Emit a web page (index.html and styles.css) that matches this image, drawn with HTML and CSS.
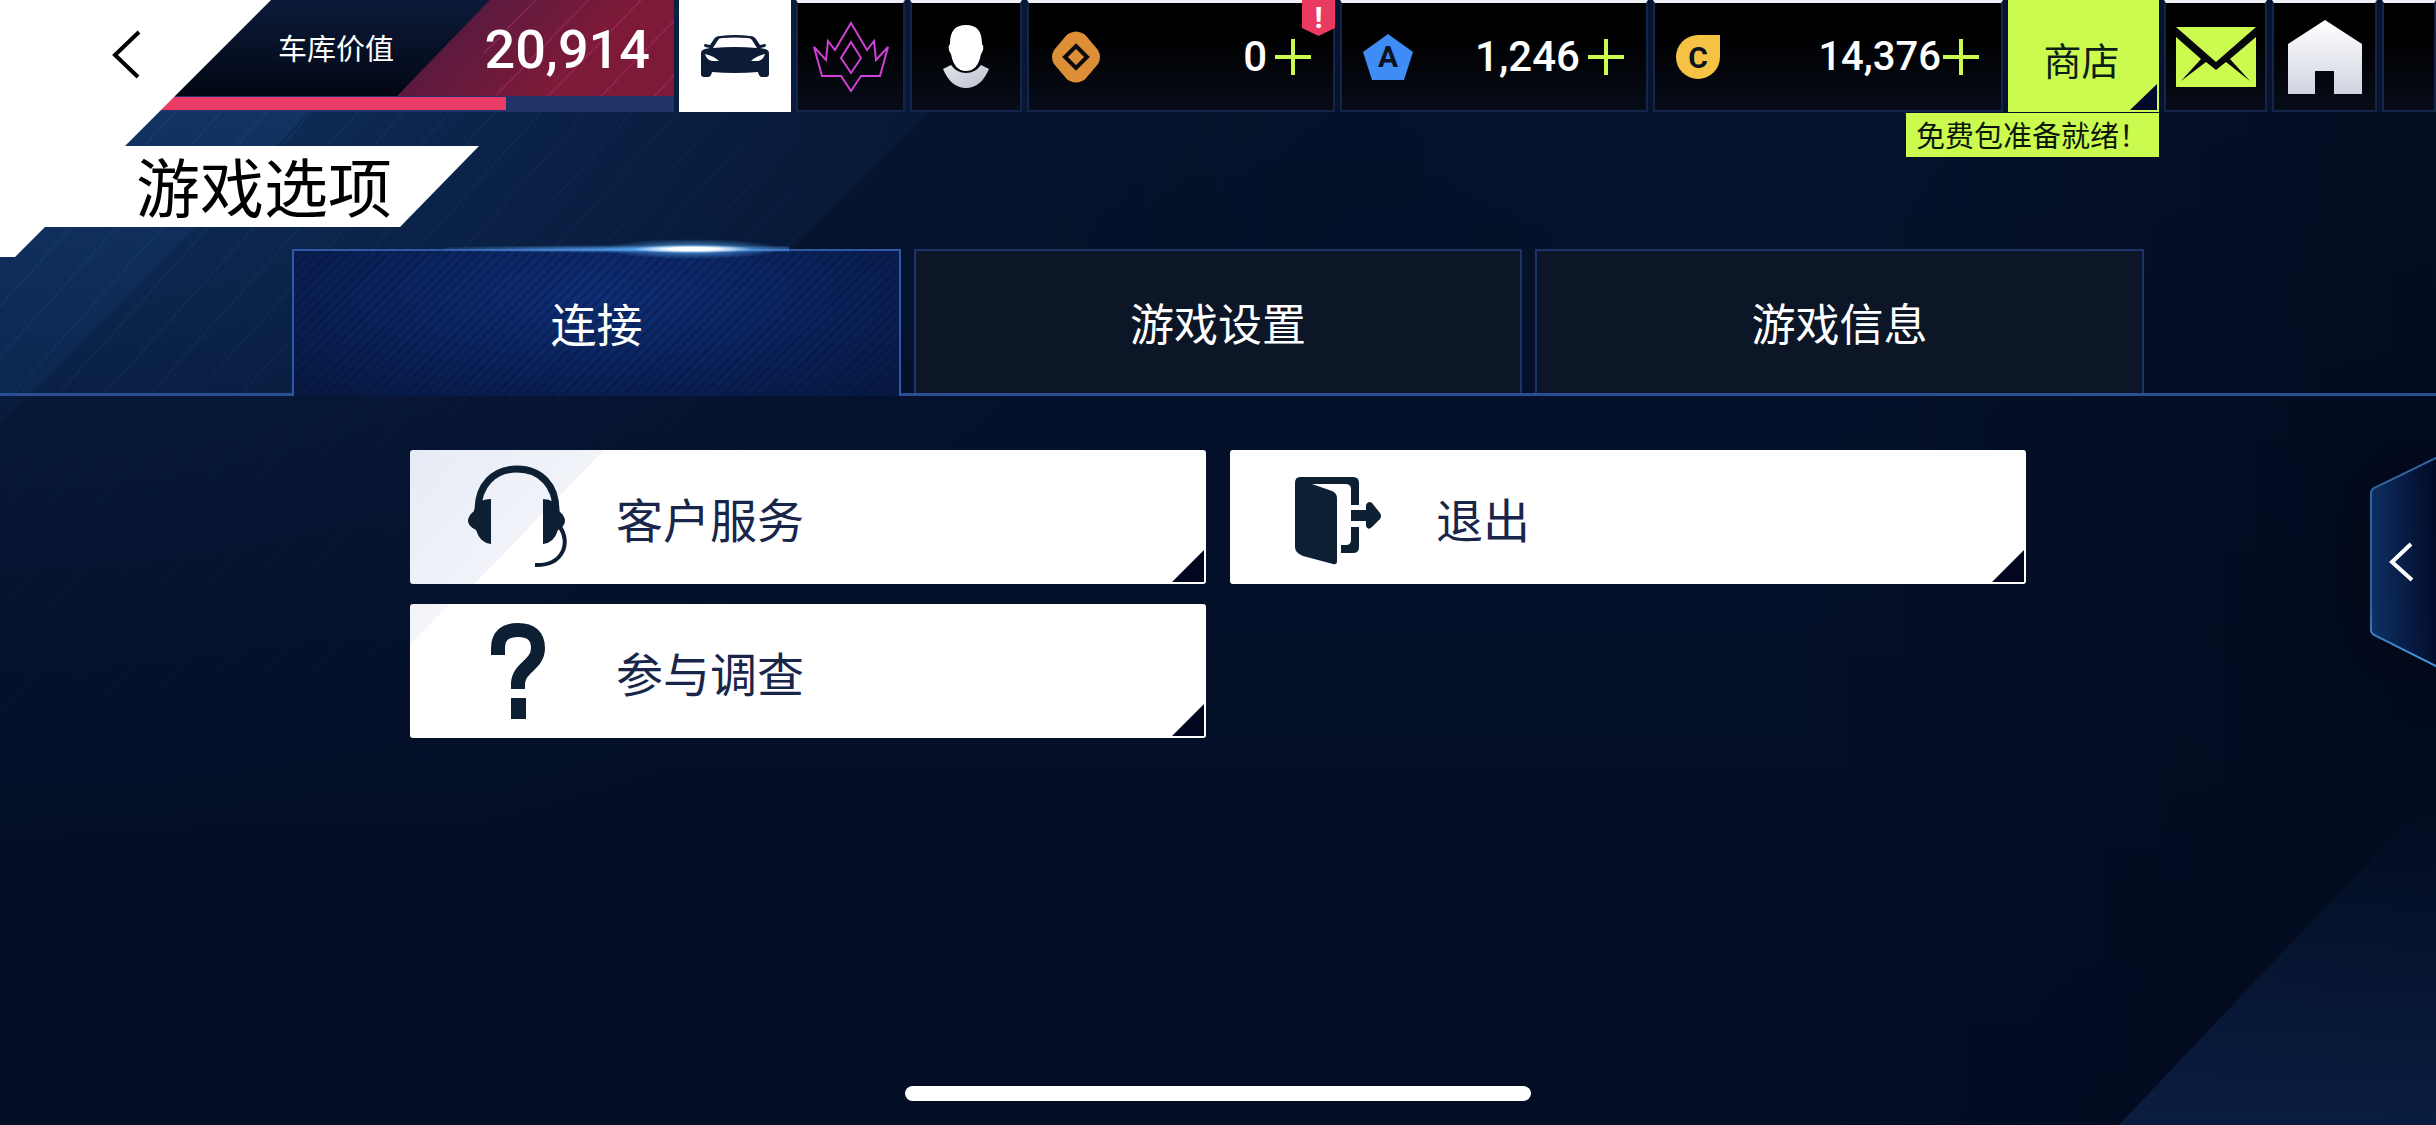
FILE: index.html
```html
<!DOCTYPE html>
<html lang="zh-CN">
<head>
<meta charset="utf-8">
<meta name="viewport" content="width=device-width, initial-scale=1">
<title>游戏选项</title>
<link rel="stylesheet" href="styles.css">
</head>
<body>
<svg class="backdrop" viewBox="0 0 2436 1125" preserveAspectRatio="none" aria-hidden="true">
  <defs>
    <linearGradient id="base" x1="0" y1="0" x2="0" y2="1"><stop offset="0" stop-color="#07142f"/><stop offset=".35" stop-color="#04122c"/><stop offset=".7" stop-color="#040e25"/><stop offset="1" stop-color="#030a1f"/></linearGradient>
    <radialGradient id="glow" cx="0" cy="0" r="1"><stop offset="0" stop-color="#12386b"/><stop offset=".5" stop-color="#0b2349" stop-opacity=".7"/><stop offset="1" stop-color="#06142e" stop-opacity="0"/></radialGradient>
    <linearGradient id="beam" x1="0" y1="0" x2="0" y2="1"><stop offset="0" stop-color="#123463"/><stop offset="1" stop-color="#0c2750" stop-opacity=".8"/></linearGradient>
    <linearGradient id="shade" x1="0" y1="0" x2="1" y2="0"><stop offset="0" stop-color="#020a1c" stop-opacity=".4"/><stop offset="1" stop-color="#020a1c" stop-opacity="0"/></linearGradient>
    <linearGradient id="side" x1="0" y1="0" x2="1" y2="0"><stop offset="0" stop-color="#020818" stop-opacity="0"/><stop offset="1" stop-color="#020818" stop-opacity=".6"/></linearGradient>
    <linearGradient id="corner" x1="0" y1="0" x2="0" y2="1"><stop offset="0" stop-color="#0a2148" stop-opacity="0"/><stop offset="1" stop-color="#0b2147" stop-opacity=".85"/></linearGradient>
    <pattern id="rays" width="34" height="34" patternUnits="userSpaceOnUse" patternTransform="rotate(42)"><path d="M1 0v34" stroke="#4a7cb8" stroke-opacity=".12" stroke-width="2"/></pattern>
    <linearGradient id="fade" x1="0" y1="0" x2=".7" y2="1"><stop offset="0" stop-color="#fff"/><stop offset="1" stop-color="#000"/></linearGradient>
    <mask id="rayMask"><rect width="800" height="760" fill="url(#fade)"/></mask>
  </defs>
  <rect width="2436" height="1125" fill="url(#base)"/>
  <rect width="1400" height="900" fill="url(#glow)"/>
  <path d="M930 112 645 395H2100V112Z" fill="url(#shade)"/>
  <path d="M0 112H309L0 425Z" fill="url(#beam)"/>
  <rect width="800" height="760" fill="url(#rays)" mask="url(#rayMask)"/>
  <path d="M0 396H2436V1125H0Z" fill="#03102a" opacity=".5"/>
  <rect x="1800" y="112" width="636" height="1013" fill="url(#side)"/>
  <path d="M2119 1125 2436 790V1125Z" fill="url(#corner)"/>
</svg>

<header class="topbar">
  <svg class="corner-plate" width="479" height="257" viewBox="0 0 479 257" aria-hidden="true"><path d="M0 0H271L125 146H479L400 227H45L15 257H0Z" fill="#fff"/></svg>
  <div class="garage">
    <div class="garage-value">
      <button class="back" type="button" aria-label="返回"><svg width="32" height="50" viewBox="0 0 32 50"><path d="M29 2 5 25 28 47" fill="none" stroke="#000" stroke-width="4"/></svg></button>
      <span class="garage-label">车库价值</span>
      <strong class="garage-number">20,914</strong>
    </div>
    <div class="progress"><div class="progress-fill"></div></div>
  </div>
  <button class="tile tile-active" type="button" aria-label="车库">
    <svg width="68" height="42" viewBox="0 0 68 42"><path fill="#0d1b36" fill-rule="evenodd" d="M0 18q0-3 4-4l5-1-5-1q-2-2 0-3l5 1 4-6q2-3 6-3 15-2 30 0 4 0 6 3l4 6 5-1q2 1 0 3l-5 1 5 1q4 1 4 4v21q0 3-3 3h-4q-3 0-4-5-23 2-46 0-1 5-4 5H3q-3 0-3-3zM12 13q22-2 44 0l-5-8q-1-2-4-2-13-1-26 0-3 0-4 2zM4 19q2 7 8 7h6q-5-5-14-7zm60 0q-9 2-14 7h6q6 0 8-7z"/></svg>
  </button>
  <button class="tile" type="button" aria-label="传奇通行证">
    <svg width="78" height="72" viewBox="0 0 78 72" fill="none" stroke="#d03fd8" stroke-width="2"><path d="M39 2 55 29 62 20 64 39 76 26 68 55H49L39 70 29 55H10L2 26 14 39 16 20 23 29Z"/><path d="M39 21 49 37 39 52 29 37Z"/></svg>
  </button>
  <button class="tile" type="button" aria-label="个人资料">
    <svg width="48" height="66" viewBox="0 0 48 66"><defs><linearGradient id="bust" x1="0" y1="0" x2="1" y2="1"><stop offset="0" stop-color="#e4e6ec"/><stop offset="1" stop-color="#b9bfcd"/></linearGradient></defs><path d="M1 45 9 41q6 8 15 8t15-8l8 4q-8 19-23 19T1 45Z" fill="url(#bust)"/><path d="M24 1C35 1 40 7 40 20q2 2 1 6-1 3-2 4-3 17-15 17T9 30Q8 29 7 26q-1-4 1-6C8 7 13 1 24 1Z" fill="#fff"/></svg>
  </button>
  <button class="tile wallet" type="button">
    <svg width="52" height="52" viewBox="0 0 52 52"><path d="M20 2q6-3 12 0 3 1 5 4L48 19q4 7 0 14L37 46q-2 3-5 4-6 3-12 0-3-1-5-4L4 33q-4-7 0-14L15 6q2-3 5-4Z" fill="#dc8f36"/><path d="M26 15 37 26 26 37 15 26Z" fill="none" stroke="#0b0b0d" stroke-width="4"/></svg>
    <span class="amount">0</span><svg class="plus" viewBox="0 0 36 36"><path d="M18 0v36M0 18h36"/></svg>
    <span class="alert">!</span>
  </button>
  <button class="tile wallet" type="button">
    <svg width="52" height="52" viewBox="0 0 52 52"><path d="M25 3 50 21 41 49H9L0 21Z" fill="#3f8cf7"/><text class="glyph" x="25" y="36" text-anchor="middle">A</text></svg>
    <span class="amount">1,246</span><svg class="plus" viewBox="0 0 36 36"><path d="M18 0v36M0 18h36"/></svg>
  </button>
  <button class="tile wallet wallet-credits" type="button">
    <svg width="52" height="52" viewBox="0 0 52 52"><path d="M22 4H44V26A22 22 0 1 1 22 4Z" fill="#f5c244"/><text class="glyph" x="22" y="37" text-anchor="middle">C</text></svg>
    <span class="amount">14,376</span><svg class="plus" viewBox="0 0 36 36"><path d="M18 0v36M0 18h36"/></svg>
  </button>
  <button class="tile shop" type="button">商店<span class="shop-note">免费包准备就绪！</span></button>
  <button class="tile" type="button" aria-label="邮件">
    <svg width="80" height="60" viewBox="0 0 80 60"><path d="M0 0H80V60H0Z" fill="#ccfb50"/><path d="M0 0v10L25 32 5 54 30 35 40 43 50 35 74 54 54 32 80 10V0L40 35Z" fill="#05070c"/></svg>
  </button>
  <button class="tile" type="button" aria-label="主页">
    <svg width="76" height="76" viewBox="0 0 76 76"><defs><linearGradient id="house" x1="0" y1="0" x2="0" y2="1"><stop offset="0" stop-color="#fff"/><stop offset="1" stop-color="#d0d4e0"/></linearGradient></defs><path d="M38 1 75 25V75H47V52H28V75H1V25Z" fill="url(#house)"/></svg>
  </button>
  <div class="tile"></div>
</header>

<main>
  <h1 class="title">游戏选项</h1>
  <div class="tabs" role="tablist">
    <button class="tab tab-active" type="button" role="tab" aria-selected="true">连接</button>
    <button class="tab" type="button" role="tab" aria-selected="false">游戏设置</button>
    <button class="tab" type="button" role="tab" aria-selected="false">游戏信息</button>
  </div>
  <div class="cards">
    <button class="card card-sheen" type="button">
      <svg width="104" height="104" viewBox="0 0 104 104"><g fill="#0c1f33"><path d="M25 34V79q-11-1-15-14-8-4-8-9t6-10q3-12 17-12ZM77 34V79q11-1 15-14 7-4 7-9t-6-10q-3-12-16-12Z"/></g><path d="M12 48C11 20 28 4 51 4s40 16 39 44" fill="none" stroke="#0c1f33" stroke-width="7"/><path d="M94 62C105 78 97 101 69 100" fill="none" stroke="#0c1f33" stroke-width="4"/></svg>
      <span>客户服务</span>
    </button>
    <button class="card" type="button">
      <svg width="104" height="104" viewBox="0 0 104 104"><g transform="translate(9 12)" fill="#0c1f33"><path d="M5 0H58q6 0 6 6V28H56V12q0-5-6-5H17L37 14q5 2 5 7V84q0 4-4 3L8 79Q0 76 0 70V6Q0 0 5 0Z"/><path d="M56 50h8V70q0 6-6 6H46V68h5q5 0 5-5ZM56 33H71V28q2-5 6-2L85 36q2 3 0 6L77 50q-4 4-6-1V44H56Z"/></g></svg>
      <span>退出</span>
    </button>
    <button class="card card-sheen-small" type="button">
      <svg width="104" height="104" viewBox="0 0 104 104"><path d="M32 36V29C32 17 39 11 52 11s20 6 20 18c0 17-19 19-20 35v6" fill="none" stroke="#0c1f33" stroke-width="14"/><path d="M45 79H60V100H45Z" fill="#0c1f33"/></svg>
      <span>参与调查</span>
    </button>
  </div>
</main>

<button class="drawer" type="button" aria-label="展开侧栏">
  <svg width="66" height="210" viewBox="0 0 66 210"><defs><linearGradient id="drawer" x1="0" y1=".4" x2="1" y2=".3"><stop offset="0" stop-color="#0d2f63"/><stop offset="1" stop-color="#020824"/></linearGradient><linearGradient id="edge" x1="0" y1="0" x2="0" y2="1"><stop offset="0" stop-color="#2f68a4"/><stop offset=".7" stop-color="#2f5f9c"/><stop offset="1" stop-color="#46a0e6"/></linearGradient></defs><path d="M70-1 4 31q-3 2-3 5V173q0 3 3 5L70 211" fill="url(#drawer)" stroke="url(#edge)" stroke-width="2"/><path d="M41 87 22 105 42 123" fill="none" stroke="#fff" stroke-width="4"/></svg>
</button>
<div class="home-indicator"></div>
</body>
</html>
```
FILE: styles.css
```css
* { box-sizing: border-box; }

html, body { height: 100%; }

body {
  margin: 0;
  position: relative;
  overflow: hidden;
  background: #030c22;
  color: #fff;
  font-family: Roboto, "Noto Sans CJK SC", sans-serif;
}

button {
  margin: 0;
  padding: 0;
  border: 0;
  background: none;
  color: inherit;
  font: inherit;
  cursor: pointer;
}

svg { display: block; flex: none; }

.backdrop {
  position: absolute;
  inset: 0;
  z-index: -1;
  width: 100%;
  height: 100%;
}

/* Top bar */
.topbar {
  position: relative;
  display: grid;
  grid-template-columns: 674fr 112fr 109fr 112fr 308fr 308fr 350fr 151fr 103fr 105fr 54fr;
  column-gap: 5px;
  height: 112px;
}

.corner-plate {
  position: absolute;
  top: 0;
  left: 0;
  z-index: 1;
}

.garage { display: flex; flex-direction: column; }

.garage-value {
  flex: 1;
  display: flex;
  align-items: center;
  padding-right: 24px;
  background:
    repeating-linear-gradient(134deg, transparent 0 36px, rgba(190, 50, 130, .3) 36px 38px) right / 190px 100% no-repeat,
    linear-gradient(134deg, transparent 0 67px, #5c1a3e 68px, #7c1a38 170px) right / 278px 100% no-repeat,
    linear-gradient(#0d1a38, #020714);
}

.back {
  position: relative;
  z-index: 2;
  width: 278px;
  height: 96px;
  padding: 14px 0 0 110px;
}

.garage-label { padding-top: 4px; font-size: 29px; line-height: 92px; }

.garage-number {
  margin-left: auto;
  padding-top: 4px;
  font-size: 54px;
  font-weight: 500;
  line-height: 92px;
}

.progress {
  height: 16px;
  padding: 1px 0 2px;
  background: #20346a;
}

.progress-fill { width: 75%; height: 13px; background: #ea3a66; }

.tile {
  position: relative;
  display: flex;
  align-items: center;
  justify-content: center;
  border: 2px solid #15244b;
  border-top: 3px solid #eef0f6;
  background: linear-gradient(#000 30%, #070c18);
}

.tile-active { border: 0; background: #fff; }

.wallet { justify-content: flex-start; padding: 0 22px 0 21px; }

.amount {
  margin-left: auto;
  font-size: 42px;
  font-weight: 500;
  line-height: 48px;
}

.plus {
  width: 36px;
  height: 36px;
  margin-left: 8px;
  fill: none;
  stroke: #ccfb50;
  stroke-width: 4px;
}

.wallet-credits .amount { font-size: 40px; }
.wallet-credits .plus { margin-left: 2px; }

.glyph { font: 700 30px Roboto, sans-serif; fill: #0b1220; }

.alert {
  position: absolute;
  top: -3px;
  right: -2px;
  width: 33px;
  height: 36px;
  background: #ea3a60;
  clip-path: polygon(0 0, 100% 0, 100% 78%, 50% 100%, 0 78%);
  font-size: 30px;
  font-weight: 700;
  line-height: 35px;
}

.shop {
  padding: 4px 4px 0 0;
  border: 0;
  background: #ccfb50;
  color: #0c1e18;
  font-size: 38px;
}

.shop::after {
  content: "";
  position: absolute;
  right: 2px;
  bottom: 2px;
  width: 27px;
  height: 26px;
  background: #04082a;
  clip-path: polygon(100% 0, 100% 100%, 0 100%);
}

.shop-note {
  position: absolute;
  top: 113px;
  right: 0;
  width: 253px;
  padding: 4px 0 0 10px;
  background: #ccfb50;
  color: #0a160a;
  font-size: 29px;
  line-height: 40px;
  text-align: left;
  white-space: nowrap;
}

/* Title and tabs */
.title {
  position: relative;
  z-index: 2;
  margin: 34px 0 22px;
  padding: 8px 0 0 136px;
  color: #000;
  font-size: 64px;
  font-weight: 400;
  line-height: 73px;
}

.tabs {
  display: grid;
  grid-template-columns: repeat(3, 1fr);
  column-gap: 13px;
  height: 147px;
  padding: 0 12%;
  background: linear-gradient(#2c4f94, #2c4f94) bottom / 100% 3px no-repeat;
}

.tab {
  position: relative;
  margin-bottom: 3px;
  border: 2px solid #1c3468;
  border-bottom: 0;
  background: #0c1627;
  font-size: 44px;
}

.tab-active {
  margin-bottom: 0;
  padding-bottom: 3px;
  border-color: #2f58a6;
  background:
    repeating-linear-gradient(135deg, transparent 0 4px, rgba(2, 12, 50, .25) 4px 7px),
    radial-gradient(ellipse at 50% 30%, #0f2f76, #0b2560 45%, #071840);
  font-size: 46px;
}

/* Light streak running along the selected tab's top edge */
.tab-active::before {
  content: "";
  position: absolute;
  top: -12px;
  left: 150px;
  right: 110px;
  height: 20px;
  background:
    radial-gradient(60px 4px at 72% 50%, #fff 40%, rgba(190, 228, 255, 0)),
    radial-gradient(90px 10px at 72% 50%, rgba(90, 175, 250, .9), rgba(40, 110, 220, 0)),
    radial-gradient(240px 4px at 60% 50%, rgba(90, 170, 250, .9), rgba(40, 110, 220, 0));
}

/* Action cards */
.cards {
  display: grid;
  grid-template-columns: 1fr 1fr;
  gap: 20px 24px;
  padding: 54px 410px 0;
}

.card {
  position: relative;
  display: flex;
  align-items: center;
  gap: 46px;
  height: 134px;
  padding-left: 56px;
  border-radius: 3px;
  background: #fff;
  color: #19264a;
  font-size: 47px;
}

.card-sheen { background: linear-gradient(134deg, #e6ebf5 0, #f1f3f9 139px, #fff 140px); }
.card-sheen-small { background: linear-gradient(134deg, #f2f3f8 0, #f5f6fa 28px, #fff 29px); }

.card::after {
  content: "";
  position: absolute;
  right: 2px;
  bottom: 2px;
  width: 32px;
  height: 32px;
  background: #03061f;
  clip-path: polygon(100% 0, 100% 100%, 0 100%);
}

/* Drawer handle and home indicator lie over the page edges */
.drawer {
  position: absolute;
  top: 457px;
  right: 0;
  filter: drop-shadow(0 0 30px rgba(0, 3, 12, .8));
}

.home-indicator {
  position: absolute;
  bottom: 24px;
  left: 50%;
  width: 626px;
  height: 15px;
  margin-left: -313px;
  border-radius: 8px;
  background: #fff;
}
```
